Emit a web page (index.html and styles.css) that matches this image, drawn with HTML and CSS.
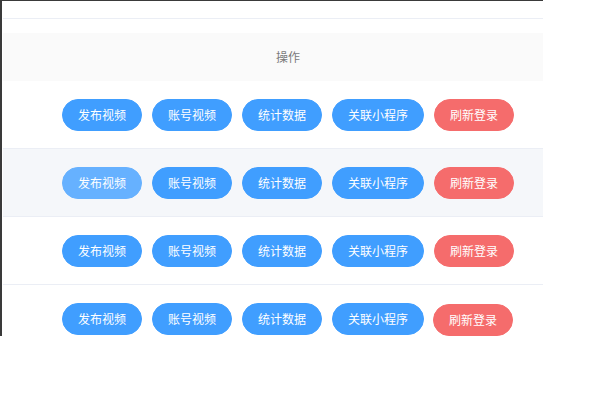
FILE: index.html
```html
<!DOCTYPE html>
<html lang="zh-CN">
<head>
<meta charset="utf-8">
<title>操作</title>
<link rel="stylesheet" href="styles.css">
</head>
<body>
<div class="frame">
  <div class="top-strip"></div>
  <div class="table">
    <div class="head-row"><div class="cell head-cell">操作</div></div>
    <div class="row">
      <div class="cell">
        <button class="btn">发布视频</button>
        <button class="btn">账号视频</button>
        <button class="btn">统计数据</button>
        <button class="btn">关联小程序</button>
        <button class="btn btn-danger">刷新登录</button>
      </div>
    </div>
    <div class="row row-hover">
      <div class="cell">
        <button class="btn btn-hover">发布视频</button>
        <button class="btn">账号视频</button>
        <button class="btn">统计数据</button>
        <button class="btn">关联小程序</button>
        <button class="btn btn-danger">刷新登录</button>
      </div>
    </div>
    <div class="row">
      <div class="cell">
        <button class="btn">发布视频</button>
        <button class="btn">账号视频</button>
        <button class="btn">统计数据</button>
        <button class="btn">关联小程序</button>
        <button class="btn btn-danger">刷新登录</button>
      </div>
    </div>
    <div class="row">
      <div class="cell">
        <button class="btn">发布视频</button>
        <button class="btn">账号视频</button>
        <button class="btn">统计数据</button>
        <button class="btn">关联小程序</button>
        <button class="btn btn-danger btn-shift">刷新登录</button>
      </div>
    </div>
  </div>
</div>
</body>
</html>
```

FILE: styles.css
```css
html, body {
  margin: 0;
  padding: 0;
  background: #ffffff;
}

body {
  font-family: "Noto Sans CJK SC", "Noto Sans", sans-serif;
}

.frame {
  width: 540px;
  height: 335px;
  border-top: 1px solid #3a3a3a;
  border-left: 2px solid #3a3a3a;
  overflow: hidden;
  padding-left: 1px;
  box-sizing: content-box;
}

.top-strip {
  height: 17px;
  border-bottom: 1px solid #ebeef5;
  margin-bottom: 14px;
}

.table {
  display: flex;
  flex-direction: column;
}

.head-row {
  height: 48px;
  background: #fafafa;
  display: flex;
  align-items: center;
}

.head-cell {
  font-size: 12px;
  color: #7a7a7a;
  line-height: 48px;
  padding-left: 28px;
}

.row {
  height: 67px;
  border-bottom: 1px solid #ebeef5;
  display: flex;
  align-items: center;
  flex: none;
}

.row-hover {
  background: #f5f7fa;
}

.cell {
  flex: 1;
  display: flex;
  justify-content: center;
  align-items: center;
  gap: 10px;
  padding-left: 30px;
}

.btn {
  font-family: "Noto Sans CJK SC", "Noto Sans", sans-serif;
  font-size: 12px;
  line-height: 12px;
  height: 32px;
  padding: 0 15px;
  border: 1px solid #409eff;
  background: #409eff;
  color: #ffffff;
  border-radius: 16px;
  white-space: nowrap;
  margin: 0;
  cursor: pointer;
}

.btn-hover {
  background: #66b1ff;
  border-color: #66b1ff;
}

.btn-danger {
  background: #f56c6c;
  border-color: #f56c6c;
}

.btn-shift {
  transform: translate(-1px, 1px);
}
```
